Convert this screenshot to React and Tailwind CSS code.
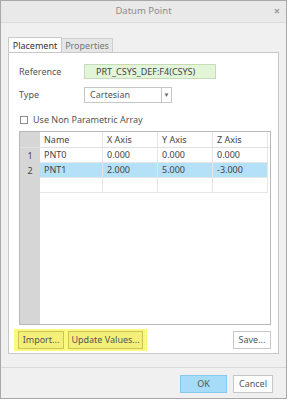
const rows = [
  { n: '1', name: 'PNT0', x: '0.000', y: '0.000', z: '0.000' },
  { n: '2', name: 'PNT1', x: '2.000', y: '5.000', z: '-3.000', selected: true },
  { n: '', name: '', x: '', y: '', z: '' },
];

const cols = 'grid grid-cols-[20px_63px_55px_55px_55px]';

function Btn({ children, className = '' }) {
  return (
    <button
      className={`flex h-[18px] items-center justify-center border text-[9px] text-[#555] ${className}`}
    >
      {children}
    </button>
  );
}

export default function App() {
  return (
    <div
      className="h-[400px] w-[289px] bg-white"
      style={{ fontFamily: '"Noto Sans", "Open Sans", sans-serif' }}
    >
      <div className="flex h-[399px] w-[287px] flex-col border border-[#a8a8a8] bg-[#f0f0f0]">
        {/* title bar */}
        <div className="relative flex h-[22px] flex-none items-center justify-center border-b border-[#dcdcdc] bg-[#e9e9e9]">
          <span className="text-[9.5px] text-[#8c8c8c]">Datum Point</span>
          <span className="absolute right-[6px] top-[4px] text-[11px] font-bold leading-none text-[#9a9a9a]">
            ×
          </span>
        </div>

        {/* body */}
        <div className="flex flex-1 flex-col px-[7px] pt-[14px]">
          <div className="flex h-[16px] items-end">
            <div className="flex h-[16px] w-[54px] items-center justify-center border border-b-0 border-[#c9c9c9] bg-white text-[9px] text-[#333]">
              Placement
            </div>
            <div className="flex h-[15px] w-[51px] items-center justify-center border border-b-0 border-l-0 border-[#cfcfcf] bg-[#e6e6e6] text-[9px] text-[#777]">
              Properties
            </div>
          </div>

          <div className="-mt-px flex h-[302px] flex-col border border-[#c9c9c9] bg-white pl-[10px] pr-[8px] pt-[11px]">
            <div className="flex h-[15px] items-center">
              <span className="w-[65px] text-[9px] text-[#555]">Reference</span>
              <div className="flex h-[15px] w-[132px] items-center border border-[#c5dcb7] bg-[#e3f5d8] pl-[11px] text-[9px] text-[#444]">
                PRT_CSYS_DEF:F4(CSYS)
              </div>
            </div>

            <div className="mt-[8px] flex h-[16px] items-center">
              <span className="w-[65px] text-[9px] text-[#555]">Type</span>
              <div className="flex h-[16px] w-[88px] items-center border border-[#c6c6c6] bg-white">
                <span className="flex-1 pl-[5px] text-[9px] text-[#555]">Cartesian</span>
                <span className="flex h-full w-[10px] items-center justify-center border-l border-[#c6c6c6] text-[6px] text-[#666]">
                  ▼
                </span>
              </div>
            </div>

            <div className="mt-[12px] flex h-[10px] items-center">
              <span className="ml-px h-[8px] w-[8px] border border-[#8a8a8a] bg-white" />
              <span className="ml-[5px] text-[9px] text-[#555]">Use Non Parametric Array</span>
            </div>

            <div className="mt-[6px] flex h-[194px] w-[252px] flex-col border border-[#b8b8b8] bg-white">
              <div className={`${cols} h-[16px] border-b border-[#e0e0e0]`}>
                <div className="bg-[#d6d6d6]" />
                {['Name', 'X Axis', 'Y Axis', 'Z Axis'].map((h) => (
                  <div
                    key={h}
                    className="flex items-center border-r border-[#e6e6e6] pl-[4px] text-[9px] text-[#444]"
                  >
                    {h}
                  </div>
                ))}
              </div>
              {rows.map((r, i) => (
                <div key={i} className={`${cols} h-[15px]`}>
                  <div className="flex items-center justify-center bg-[#d6d6d6] text-[9px] text-[#444]">
                    {r.n}
                  </div>
                  {[r.name, r.x, r.y, r.z].map((v, j) => (
                    <div
                      key={j}
                      className={`flex items-center border-b border-r border-[#e6e6e6] pl-[4px] text-[9px] text-[#444] ${
                        r.selected ? 'bg-[#b4e0f8]' : ''
                      }`}
                    >
                      {v}
                    </div>
                  ))}
                </div>
              ))}
              <div className="flex flex-1">
                <div className="w-[20px] bg-[#d6d6d6]" />
              </div>
            </div>

            <div className="mt-[4px] flex items-center">
              <div className="-ml-[5px] flex h-[22px] items-center gap-[4px] bg-[#fbf979] px-[4px]">
                <Btn className="w-[46px] border-[#c9c45c] bg-[#f3ef78]">Import...</Btn>
                <Btn className="w-[75px] border-[#c9c45c] bg-[#f3ef78]">Update Values...</Btn>
              </div>
              <Btn className="ml-auto mr-[-1px] w-[38px] border-[#c6c6c6] bg-white">Save...</Btn>
            </div>
          </div>

          <div className="mx-[-7px] mt-[13px] border-t border-[#d9d9d9]" />
          <div className="flex justify-end gap-[6px] pr-[6px] pt-[7px]">
            <Btn className="h-[18px] w-[47px] border-[#86c9ee] bg-[#a7dcf8]">OK</Btn>
            <Btn className="h-[18px] w-[40px] border-[#c6c6c6] bg-white">Cancel</Btn>
          </div>
        </div>
      </div>
    </div>
  );
}
